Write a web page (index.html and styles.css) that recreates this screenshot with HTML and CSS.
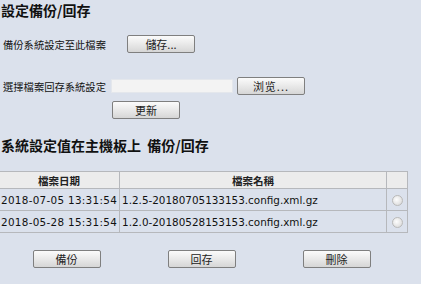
FILE: index.html
```html
<!DOCTYPE html>
<html lang="zh-Hant">
  <head>
    <meta charset="UTF-8" />
    <title>設定備份/回存</title>
    <link rel="stylesheet" href="styles.css">
  </head>
  <body>
    <div class="page">
      <h2 class="title">設定備份/回存</h2>
      <div class="row save-row">
        <span class="label">備份系統設定至此檔案</span>
        <button class="btn save-btn">儲存...</button>
      </div>
      <div class="row load-row">
        <span class="label">選擇檔案回存系統設定</span>
        <input type="text" class="file-input" />
        <button class="btn browse-btn">浏览...</button>
      </div>
      <div class="row update-row">
        <button class="btn">更新</button>
      </div>

      <h2 class="title section-title">系統設定值在主機板上&nbsp;&nbsp;備份/回存</h2>
      <table class="files">
        <thead>
          <tr>
            <th class="col-date">檔案日期</th>
            <th class="col-name">檔案名稱</th>
            <th class="col-pick"></th>
          </tr>
        </thead>
        <tbody>
          <tr>
            <td class="date">2018-07-05 13:31:54</td>
            <td>1.2.5-20180705133153.config.xml.gz</td>
            <td class="pick"><span class="radio"></span></td>
          </tr>
          <tr>
            <td class="date">2018-05-28 15:31:54</td>
            <td>1.2.0-20180528153153.config.xml.gz</td>
            <td class="pick"><span class="radio"></span></td>
          </tr>
        </tbody>
      </table>
      <div class="actions">
        <button class="btn">備份</button>
        <button class="btn">回存</button>
        <button class="btn">刪除</button>
      </div>
    </div>
  </body>
</html>
```

FILE: styles.css
```css
body {
  margin: 0;
  background-color: #dbe1ec;
  font-family: "DejaVu Sans", "Noto Sans CJK TC", sans-serif;
  font-size: 11px;
  color: #000;
}
.page {
  padding-left: 1px;
}
.title {
  margin: 0;
  font-family: "Noto Sans CJK TC", sans-serif;
  font-size: 14px;
  font-weight: bold;
  line-height: 20px;
  color: #111;
}
.row {
  display: flex;
  align-items: center;
  padding-left: 2px;
}
.label {
  font-family: "Noto Sans CJK TC", sans-serif;
  font-size: 10.3px;
  color: #111;
}
.save-row {
  margin-top: 15px;
}
.save-btn {
  margin-left: 21px;
}
.load-row {
  margin-top: 24px;
}
.file-input {
  margin-left: 5px;
  width: 122px;
  height: 14px;
  box-sizing: border-box;
  border: 1px solid #e4e7ec;
  background: #f3f3f3;
  padding: 0;
}
.browse-btn {
  margin-left: 4px;
  width: 57px;
  height: 15px;
  font-family: "DejaVu Serif", "Noto Sans CJK SC", serif;
  letter-spacing: 1px;
}
.update-row {
  margin-top: 6px;
  padding-left: 111px;
}
.btn {
  width: 68px;
  height: 18px;
  padding: 0;
  border: 1px solid #7f7f7f;
  border-radius: 2px;
  background: linear-gradient(#fbfbfb, #e9e9e9 50%, #d6d6d6);
  font-family: "Noto Sans CJK TC", sans-serif;
  font-size: 11px;
  line-height: 14px;
  color: #222;
  cursor: pointer;
}
.section-title {
  margin-top: 16px;
}
.files {
  margin-top: 16px;
  margin-left: -3px;
  width: 410px;
  border-collapse: collapse;
}
.files th,
.files td {
  border: 1px solid #b6b8bc;
  padding: 0 2px;
  white-space: nowrap;
}
.files th {
  height: 16px;
  background: #ececec;
  font-family: "Noto Sans CJK TC", sans-serif;
  font-size: 10.5px;
  font-weight: bold;
  color: #222;
}
.files td {
  height: 21px;
  font-size: 10.4px;
  color: #111;
}
.files td.date {
  letter-spacing: 0.3px;
}
.col-date {
  width: 115px;
}
.col-pick {
  width: 16px;
}
.files td.pick {
  text-align: center;
}
.radio {
  display: inline-block;
  width: 9px;
  height: 9px;
  border: 1px solid #b9b9b9;
  border-radius: 50%;
  background: radial-gradient(circle at 40% 40%, #fdfdfd, #d4d4d4);
  vertical-align: middle;
}
.actions {
  display: grid;
  grid-template-columns: repeat(3, 135px);
  justify-items: center;
  margin-top: 17px;
  margin-left: -2px;
}
```
